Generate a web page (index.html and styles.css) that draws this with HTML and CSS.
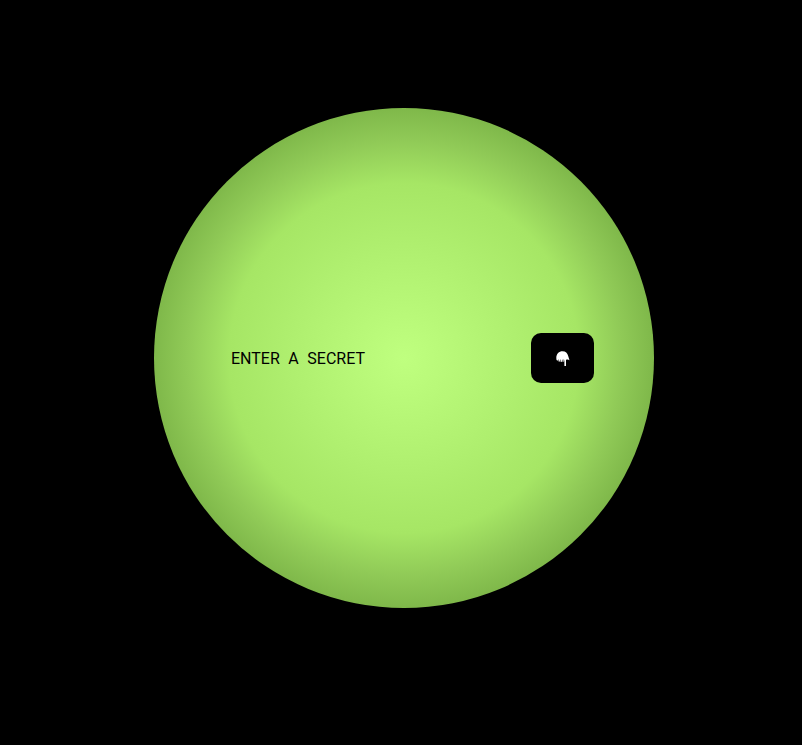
FILE: index.html
```html
<!DOCTYPE html>
<html lang="en">
<head>
  <meta charset="UTF-8" />
  <meta name="viewport" content="width=device-width, initial-scale=1.0"/>
  <title>Enter a secret</title>
  <link rel="stylesheet" href="styles.css">
</head>
<body>

  <form class="orb">
    <input class="secret" type="text" placeholder="ENTER A SECRET">
    <button class="submit" type="button" aria-label="Submit">
      <svg class="hand" width="14" height="15" viewBox="0 0 14 15">
        <path fill="#fff" d="M.3 7C.3 3 3 .3 6.5.3c3.2 0 4.9 2 5.6 4.4l1.4 4.6-1.6-.7-1.3-.2-.6.6v6c0 .8-1.6.8-1.6 0V10.500L7.900 7.800l-.5 3.200h-.7L6.200 8l-.5 3-1-.1-.4-2.800-.7 2.600-1-.2-.2-2.400-.7 1.600-1.200-.6z"/>
      </svg>
    </button>
  </form>

</body>
</html>
```

FILE: styles.css
```css
body {
  margin: 0;
  min-height: 745px;
  background-color: #000;
  overflow: hidden;
}
.orb {
  box-sizing: border-box;
  display: flex;
  align-items: center;
  justify-content: space-between;
  width: 500px;
  height: 500px;
  margin: 108px 0 0 154px;
  padding: 0 60px 0 77px;
  border-radius: 50%;
  background: radial-gradient(circle closest-side, #bfff7f 0%, #afef6f 45%, #a6e665 70%, #90ca57 87%, #7fb84a 100%);
}
.secret {
  width: 200px;
  padding: 1px 0 0;
  border: none;
  outline: none;
  background: transparent;
  color: #000;
  font-family: Roboto, sans-serif;
  font-size: 16px;
  word-spacing: 4.6px;
}
.secret::placeholder {
  color: #000;
  opacity: 1;
}
.submit {
  display: flex;
  align-items: center;
  justify-content: center;
  width: 63px;
  height: 50px;
  padding: 0;
  border: none;
  border-radius: 10px;
  background-color: #000;
  cursor: pointer;
}
```
